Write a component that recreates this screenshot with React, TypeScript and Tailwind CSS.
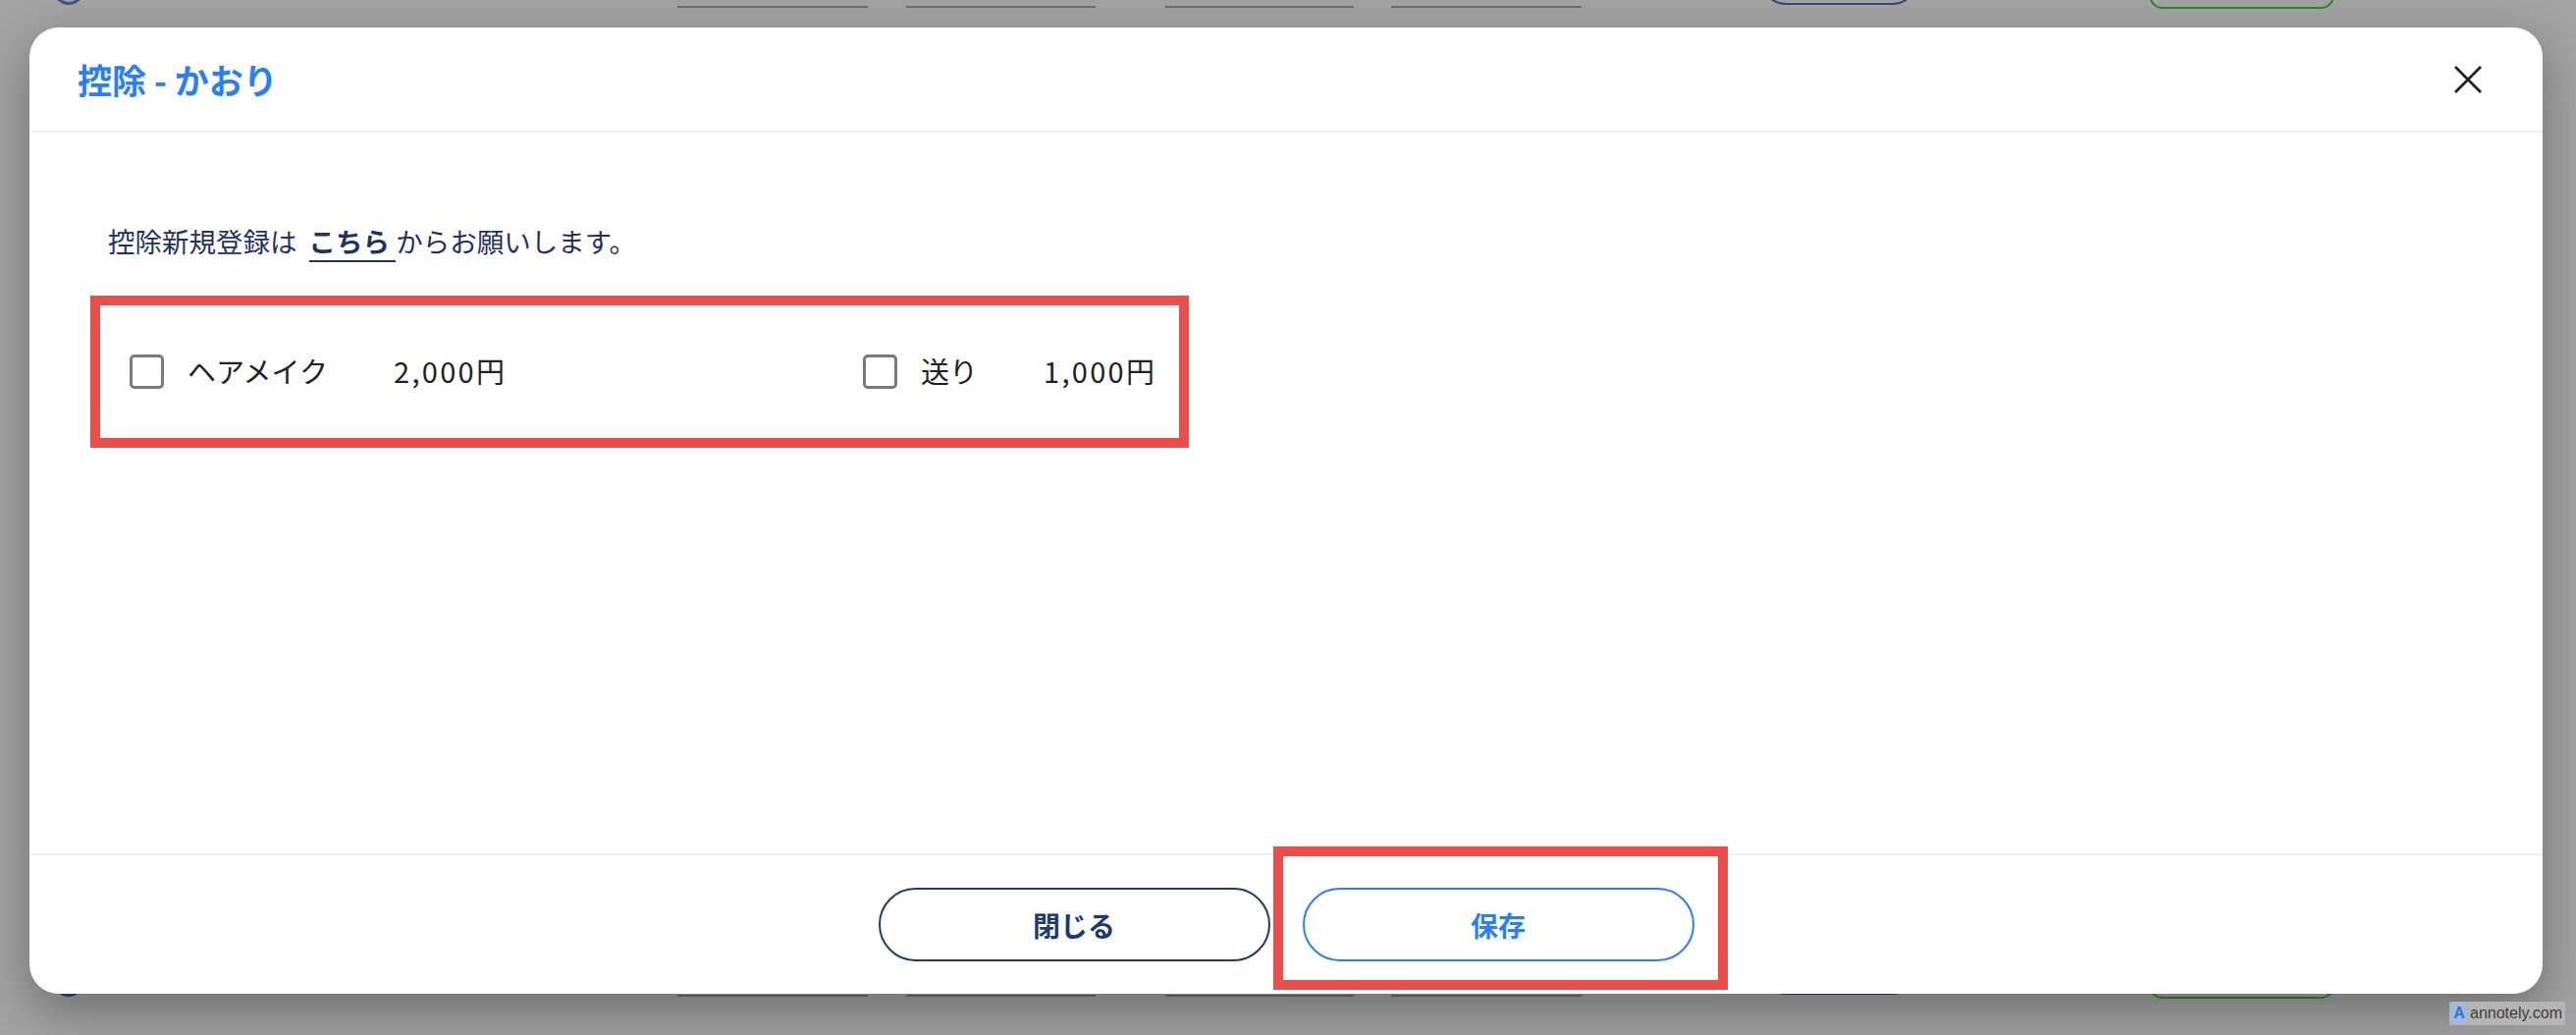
import { useState } from 'react';

const deductions = [
  { id: 'hair', label: 'ヘアメイク', price: '2,000円' },
  { id: 'send', label: '送り', price: '1,000円' },
];

// the page behind the dim overlay, only its edges show
function PageRow({ bottom }: { bottom?: boolean }) {
  return (
    <div className={`flex items-end ${bottom ? 'h-[147px]' : 'h-[10px]'}`}>
      <div
        className={`ml-[54px] h-[32px] w-[32px] shrink-0 rounded-full ${
          bottom ? 'mb-[2px] bg-[#2f427a]' : 'mb-[5px] border-[3px] border-[#40548c]'
        }`}
      />
      <div className="mb-[2px] ml-[604px] h-[2px] w-[194px] shrink-0 bg-[#6e6e6e]" />
      <div className="mb-[2px] ml-[39px] h-[2px] w-[193px] shrink-0 bg-[#6e6e6e]" />
      <div className="mb-[2px] ml-[71px] h-[2px] w-[192px] shrink-0 bg-[#6e6e6e]" />
      <div className="mb-[2px] ml-[38px] h-[2px] w-[194px] shrink-0 bg-[#6e6e6e]" />
      <div
        className={`ml-[183px] h-[50px] w-[159px] shrink-0 rounded-full ${
          bottom ? 'mb-[4px] bg-[#2f427a]' : 'mb-[5px] border-2 border-[#33497f]'
        }`}
      />
      <div
        className={`ml-[236px] h-[54px] w-[189px] shrink-0 rounded-[14px] border-2 border-[#2d8a2d] ${
          bottom ? 'mb-0' : 'mb-[1px]'
        }`}
      />
    </div>
  );
}

function CloseIcon() {
  return (
    <svg width="28" height="28" viewBox="0 0 28 28" fill="none">
      <path d="M2 2L26 26M26 2L2 26" stroke="#222222" strokeWidth="2.8" strokeLinecap="square" />
    </svg>
  );
}

function Checkbox({ checked, onChange }: { checked: boolean; onChange: () => void }) {
  return (
    <button
      onClick={onChange}
      className="flex h-[35px] w-[35px] shrink-0 items-center justify-center rounded-[5px] border-[3px] border-[#7a7a7a] bg-white"
    >
      {checked && (
        <svg width="22" height="22" viewBox="0 0 22 22" fill="none">
          <path d="M4 11l5 5 9-10" stroke="#2a7ff3" strokeWidth="3" />
        </svg>
      )}
    </button>
  );
}

export default function App() {
  const [checked, setChecked] = useState<Record<string, boolean>>({});

  return (
    <div className="relative h-[1054px] w-[2624px] overflow-hidden bg-[#a3a3a3] font-['Noto_Sans_CJK_JP','Noto_Sans',sans-serif]">
      <div className="flex h-full flex-col">
        <PageRow />
        <div className="h-[860px]" />
        <PageRow bottom />
      </div>

      <div className="absolute inset-0 pl-[30px] pt-[28px]">
        <div className="flex h-[984px] w-[2560px] flex-col rounded-[30px] bg-white shadow-[0_18px_50px_rgba(0,0,0,0.32)]">
          <div className="flex h-[107px] shrink-0 items-center justify-between border-b-2 border-[#f0f0f0] pl-[49px] pr-[62px]">
            <h2 className="text-[35px] leading-none font-semibold text-[#2a7ff3]">控除 - かおり</h2>
            <button className="flex h-[28px] w-[28px] items-center justify-center">
              <CloseIcon />
            </button>
          </div>

          <div className="flex flex-1 flex-col pl-[80px] pt-[90px]">
            <p className="text-[27.5px] leading-[40px] text-[#1f3263]">
              控除新規登録は<span className="inline-block w-[12px]" />
              <a className="cursor-pointer border-b-2 border-[#1f3263] font-bold">こちら </a>
              からお願いします。
            </p>

            <div className="mt-[93px] ml-[22px] grid grid-cols-[747px_auto]">
              {deductions.map((d) => (
                <label key={d.id} className="flex h-[40px] items-center text-[29px] text-[#222222]">
                  <Checkbox
                    checked={!!checked[d.id]}
                    onChange={() => setChecked({ ...checked, [d.id]: !checked[d.id] })}
                  />
                  <span className="ml-[24px]">{d.label}</span>
                  <span className="ml-[67px] tracking-[2.3px]">{d.price}</span>
                </label>
              ))}
            </div>
          </div>

          <div className="flex h-[143px] shrink-0 items-center justify-center gap-[33px] border-t-2 border-[#f0f0f0]">
            <button className="h-[75px] w-[399px] rounded-full border-2 border-[#1f3a70] bg-white text-[28px] font-bold text-[#1f3a70]">
              閉じる
            </button>
            <button className="h-[75px] w-[399px] rounded-full border-2 border-[#2a7ff3] bg-white text-[28px] font-bold text-[#2a7ff3]">
              保存
            </button>
          </div>
        </div>
      </div>

      {/* annotation boxes drawn on the screenshot */}
      <div className="pointer-events-none absolute left-[92px] top-[301px] h-[155px] w-[1119px] border-[10px] border-[#eb4f4c]" />
      <div className="pointer-events-none absolute left-[1297px] top-[862px] h-[146px] w-[463px] border-[10px] border-[#eb4f4c]" />

      <div className="absolute left-[2495px] top-[1020px] flex h-[24px] w-[118px] items-center gap-[3px] rounded-[2px] bg-[#b5b5b5] pl-[2px]">
        <span className="flex h-[20px] w-[16px] items-center justify-center bg-[#9dbbe8] font-['Liberation_Sans',sans-serif] text-[16px] font-bold leading-none text-[#3b6fd1]">
          A
        </span>
        <span className="font-['Liberation_Sans',sans-serif] text-[16px] leading-none text-[#3d3d3d]">annotely.com</span>
      </div>
    </div>
  );
}
